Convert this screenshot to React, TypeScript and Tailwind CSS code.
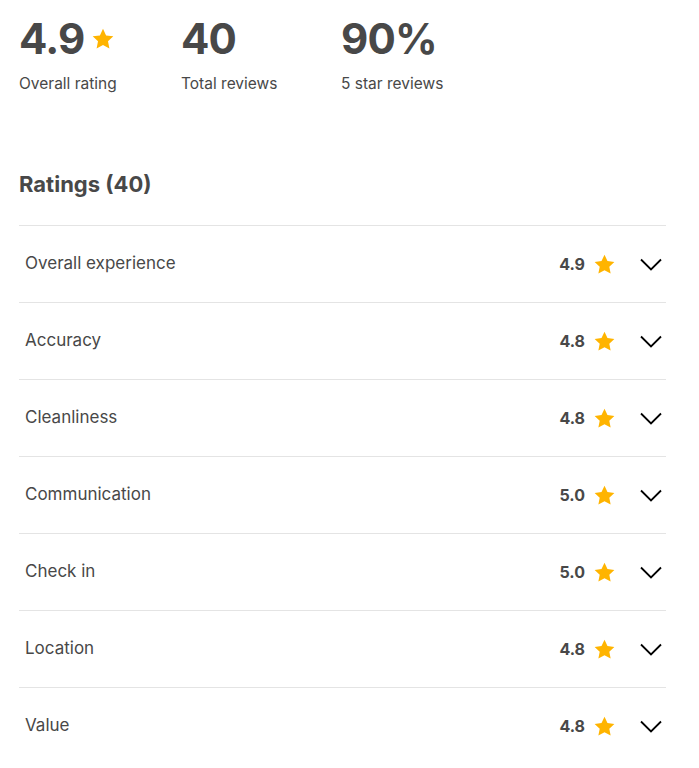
const stats = [
  { value: "4.9", label: "Overall rating", star: true },
  { value: "40", label: "Total reviews" },
  { value: "90%", label: "5 star reviews" },
];

const ratings = [
  { name: "Overall experience", score: "4.9" },
  { name: "Accuracy", score: "4.8" },
  { name: "Cleanliness", score: "4.8" },
  { name: "Communication", score: "5.0" },
  { name: "Check in", score: "5.0" },
  { name: "Location", score: "4.8" },
  { name: "Value", score: "4.8" },
];

const Star = ({ size }: { size: number }) => (
  <svg width={size} height={size} viewBox="0 0 24 24" className="text-[#ffb400]">
    <path
      fill="currentColor"
      d="M12 1.8l3.1 6.6 7.2.9-5.3 5 1.4 7.1L12 17.9l-6.4 3.5L7 14.3l-5.3-5 7.2-.9z"
    />
  </svg>
);

const Chevron = () => (
  <svg width="22" height="13" viewBox="0 0 22 13" className="ml-[24px] mr-[4px]">
    <polyline points="1,1.5 11,11.5 21,1.5" fill="none" stroke="#000" strokeWidth="1.8" />
  </svg>
);

export default function App() {
  return (
    <div className="bg-white min-h-screen px-[19px] text-[#484848] font-['Inter',sans-serif]">
      {/* Summary */}
      <div className="flex pt-[12px]">
        {stats.map((s, i) => (
          <div key={s.label} className={i === 0 ? "w-[162px]" : "w-[160px]"}>
            <div className="flex items-center gap-[7px]">
              <span className="text-[42px] font-bold leading-[54px] tracking-[-0.8px]">{s.value}</span>
              {s.star && <Star size={24} />}
            </div>
            <div className="text-[15.5px] leading-[20px] mt-[8px]">{s.label}</div>
          </div>
        ))}
      </div>

      <h2 className="text-[22px] font-bold leading-[30px] mt-[75px] mb-[26px]">Ratings (40)</h2>

      <div className="w-[647px]">
        {ratings.map((r) => (
          <div key={r.name} className="flex items-center h-[77px] pl-[6px] border-t border-[#e4e4e4]">
            <span className="flex-1 text-[17px]">{r.name}</span>
            <span className="text-[16px] font-bold mr-[8px]">{r.score}</span>
            <Star size={23} />
            <Chevron />
          </div>
        ))}
      </div>
    </div>
  );
}
